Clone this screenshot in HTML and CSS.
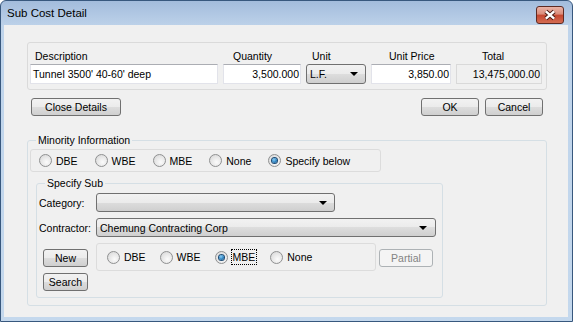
FILE: index.html
```html
<!DOCTYPE html>
<html lang="en">
<head>
    <meta charset="UTF-8">
    <meta name="viewport" content="width=device-width, initial-scale=1.0">
    <title>Sub Cost Detail</title>
    <link rel="stylesheet" href="styles.css">
</head>
<body>
    <div class="ventana">
        <div class="barra-titulo">
            <span class="titulo">Sub Cost Detail</span>
            <button class="cerrar" title="Close">
                <svg width="28" height="18" viewBox="0 0 28 18">
                    <path d="M9.5 5 L18.5 13 M18.5 5 L9.5 13" stroke="#4a1a12" stroke-width="4.6" fill="none"/>
                    <path d="M9.5 5 L18.5 13 M18.5 5 L9.5 13" stroke="#ffffff" stroke-width="2.6" fill="none"/>
                </svg>
            </button>
        </div>

        <div class="cliente">
            <div class="panel-item">
                <div class="rejilla-item">
                    <span class="col-etiqueta et-desc">Description</span>
                    <span class="col-etiqueta et-cant">Quantity</span>
                    <span class="col-etiqueta et-unidad">Unit</span>
                    <span class="col-etiqueta et-precio">Unit Price</span>
                    <span class="col-etiqueta et-total">Total</span>

                    <div class="caja">Tunnel 3500' 40-60' deep</div>
                    <div class="caja numero">3,500.000</div>
                    <div class="combo"><span>L.F.</span><span class="flecha"></span></div>
                    <div class="caja numero">3,850.00</div>
                    <div class="caja numero solo-lectura">13,475,000.00</div>
                </div>
            </div>

            <div class="fila-botones">
                <button class="boton boton-detalles">Close Details</button>
                <div class="acciones">
                    <button class="boton boton-dialogo">OK</button>
                    <button class="boton boton-dialogo">Cancel</button>
                </div>
            </div>

            <fieldset class="grupo grupo-minoria">
                <legend>Minority Information</legend>
                <div class="panel-radios radios-minoria">
                    <label class="opcion"><span class="radio"></span>DBE</label>
                    <label class="opcion"><span class="radio"></span>WBE</label>
                    <label class="opcion"><span class="radio"></span>MBE</label>
                    <label class="opcion"><span class="radio"></span>None</label>
                    <label class="opcion"><span class="radio marcado"></span>Specify below</label>
                </div>

                <fieldset class="grupo grupo-sub">
                    <legend>Specify Sub</legend>
                    <div class="fila-campo">
                        <span class="etiqueta-campo">Category:</span>
                        <div class="combo combo-categoria"><span></span><span class="flecha"></span></div>
                    </div>
                    <div class="fila-campo">
                        <span class="etiqueta-campo">Contractor:</span>
                        <div class="combo combo-contratista"><span>Chemung Contracting Corp</span><span class="flecha"></span></div>
                    </div>
                    <div class="parte-inferior">
                        <div class="botones-sub">
                            <button class="boton boton-chico">New</button>
                            <button class="boton boton-chico">Search</button>
                        </div>
                        <div class="panel-radios radios-sub">
                            <label class="opcion"><span class="radio"></span>DBE</label>
                            <label class="opcion"><span class="radio"></span>WBE</label>
                            <label class="opcion"><span class="radio marcado"></span><span class="foco">MBE</span></label>
                            <label class="opcion"><span class="radio"></span>None</label>
                        </div>
                        <button class="boton boton-parcial" disabled>Partial</button>
                    </div>
                </fieldset>
            </fieldset>
        </div>
    </div>
</body>
</html>
```

FILE: styles.css
```css
body {
    margin: 0;
    font-family: 'Liberation Sans', Arial, sans-serif;
    font-size: 10.5px;
    color: #000;
    background-color: #ffffff;
}

.ventana {
    width: 573px;
    height: 322px;
    box-sizing: border-box;
    border: 1px solid #38587e;
    border-radius: 6px 6px 0 0;
    padding: 0 4px 4px 3px;
    display: flex;
    flex-direction: column;
    background: linear-gradient(to bottom, #a3bcdc 0, #bcd1e9 24px, #bfd4eb 24px, #c4d8ed 100%);
}

.barra-titulo {
    height: 24px;
    display: flex;
    align-items: center;
    justify-content: space-between;
    padding-left: 3px;
}

.titulo {
    font-size: 11.5px;
    color: #000;
}

.cerrar {
    width: 28px;
    height: 18px;
    padding: 0;
    margin-right: 4px;
    margin-top: 3px;
    border: 1px solid #5e2a22;
    border-radius: 3px;
    background: linear-gradient(to bottom, #eab3a6 0%, #db8c7a 45%, #c5462f 50%, #d46c52 100%);
    display: flex;
    align-items: center;
    justify-content: center;
    box-sizing: border-box;
}

.cerrar svg {
    display: block;
}

.cliente {
    width: 564px;
    height: 292px;
    box-sizing: border-box;
    background-color: #f0f0f0;
    padding: 17px 0 0 23px;
}

/* Panel superior con la partida */
.panel-item {
    width: 520px;
    height: 48px;
    box-sizing: border-box;
    border: 1px solid #dadada;
    border-radius: 3px;
    padding: 6px 0 0 2px;
}

.rejilla-item {
    display: grid;
    grid-template-columns: 188px 78px 60px 80px 86px;
    grid-template-rows: 14px 20px;
    column-gap: 5px;
    row-gap: 1px;
}

.col-etiqueta {
    line-height: 14px;
    white-space: nowrap;
}

.et-desc { padding-left: 5px; }
.et-cant { padding-left: 10px; }
.et-unidad { padding-left: 6px; }
.et-precio { padding-left: 18px; }
.et-total { padding-left: 26px; }

.caja {
    height: 20px;
    box-sizing: border-box;
    background-color: #fff;
    border: 1px solid #e2e3ea;
    border-top-color: #abadb3;
    line-height: 18px;
    padding: 0 2px 0 2px;
    white-space: nowrap;
    overflow: hidden;
}

.numero {
    text-align: right;
    padding-right: 1px;
}

.solo-lectura {
    background-color: #f0f0f0;
    border-color: #d9d9d9;
}

.combo {
    height: 20px;
    box-sizing: border-box;
    border: 1px solid #707070;
    border-radius: 3px;
    background: linear-gradient(to bottom, #f2f2f2 0%, #ebebeb 50%, #dddddd 50%, #cfcfcf 100%);
    display: flex;
    align-items: center;
    padding-left: 3px;
    white-space: nowrap;
}

.flecha {
    margin-left: auto;
    margin-right: 7px;
    width: 0;
    height: 0;
    border-left: 4px solid transparent;
    border-right: 4px solid transparent;
    border-top: 4px solid #000;
}

.boton {
    font: inherit;
    color: #000;
    height: 18px;
    padding: 0;
    box-sizing: border-box;
    border: 1px solid #707070;
    border-radius: 3px;
    background: linear-gradient(to bottom, #f2f2f2 0%, #ebebeb 50%, #dddddd 50%, #cfcfcf 100%);
    cursor: pointer;
}

.fila-botones {
    width: 520px;
    margin-top: 8px;
    padding: 0 4px;
    box-sizing: border-box;
    display: flex;
    justify-content: space-between;
}

.boton-detalles {
    width: 90px;
}

.acciones {
    display: flex;
    gap: 6px;
}

.boton-dialogo {
    width: 58px;
}

/* Grupos */
.grupo {
    margin: 0;
    box-sizing: border-box;
    border: 1px solid #d5dfe5;
    border-radius: 3px;
    min-width: 0;
}

.grupo legend {
    padding: 0 2px;
    margin-left: 6px;
    line-height: 14px;
    height: 14px;
}

.grupo-minoria {
    width: 520px;
    margin-top: 17px;
    padding: 2px 0 7px 2px;
}

.panel-radios {
    box-sizing: border-box;
    border: 1px solid #dcdcdc;
    border-radius: 3px;
    display: flex;
    align-items: center;
}

.radios-minoria {
    width: 351px;
    height: 23px;
    padding-left: 8px;
    gap: 17px;
}

.opcion {
    display: flex;
    align-items: center;
    gap: 4px;
    white-space: nowrap;
}

.radio {
    width: 13px;
    height: 13px;
    box-sizing: border-box;
    border-radius: 50%;
    border: 1px solid #8f9091;
    background: radial-gradient(circle at 60% 65%, #fbfbfb 0%, #e6e6e6 55%, #d2d2d2 100%);
    display: flex;
    align-items: center;
    justify-content: center;
}

.radio.marcado::after {
    content: '';
    width: 5px;
    height: 5px;
    border-radius: 50%;
    background: radial-gradient(circle at 40% 35%, #8fd0f5 0%, #2c83c2 55%, #14436d 100%);
    box-shadow: 0 0 0 1px #1d4a73;
}

.grupo-sub {
    width: 407px;
    margin-top: 4px;
    margin-left: 6px;
    padding: 3px 0 6px 2px;
}

.fila-campo {
    display: flex;
    align-items: center;
    height: 19px;
    margin-bottom: 6px;
}

.etiqueta-campo {
    width: 57px;
    white-space: nowrap;
}

.fila-campo .combo {
    height: 19px;
}

.combo-categoria {
    width: 239px;
}

.combo-contratista {
    width: 340px;
}

.combo-contratista .flecha {
    margin-right: 8px;
}

.parte-inferior {
    display: flex;
    align-items: flex-start;
    height: 48px;
}

.botones-sub {
    margin-left: 4px;
    padding-top: 6px;
    display: flex;
    flex-direction: column;
    gap: 6px;
}

.boton-chico {
    width: 45px;
}

.radios-sub {
    width: 280px;
    height: 28px;
    margin-left: 8px;
    padding-left: 10px;
    gap: 14px;
}

.foco {
    outline: 1px dotted #000;
    outline-offset: 0;
    padding: 0 1px;
    line-height: 14px;
}

.boton-parcial {
    width: 54px;
    margin-left: 3px;
    margin-top: 6px;
    border-color: #adb2b5;
    background: #f4f4f4;
    color: #838383;
    cursor: default;
}
```
